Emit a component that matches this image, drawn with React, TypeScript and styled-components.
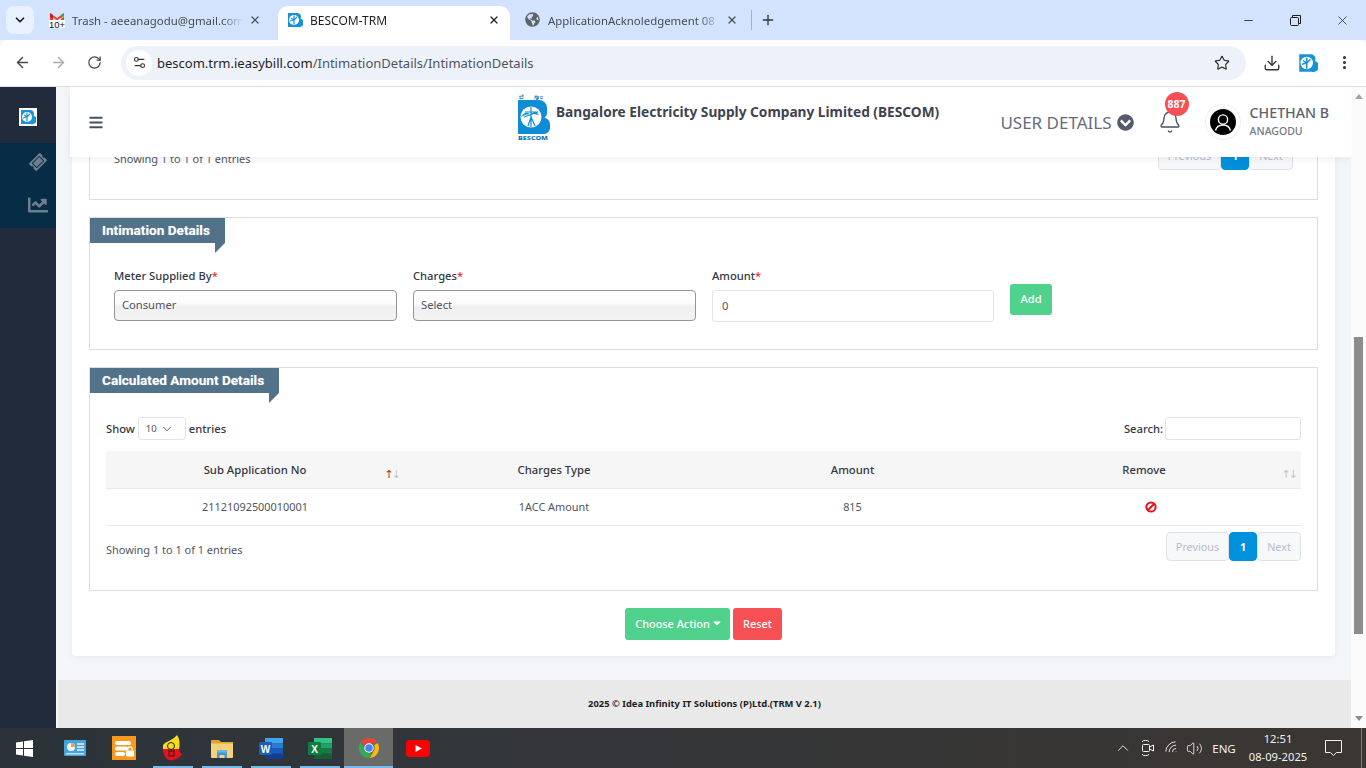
import React from "react";
import styled, { createGlobalStyle } from "styled-components";
import { ArrowLeft, ArrowRight, Bell, ChevronDown, ChevronUp, Download, EllipsisVertical, Minus, Plus, RotateCw, Settings2, Star, Volume2, Wifi, X } from "lucide-react";
import { FaBars, FaChartLine, FaChevronCircleDown, FaGlobeAmericas, FaTicketAlt, FaCaretDown } from "react-icons/fa";

const Global = createGlobalStyle`
  html, body { margin: 0; padding: 0; background: #f4f5f8; }
  * { box-sizing: border-box; }
  body { font-family: "Noto Sans", "Open Sans", sans-serif; }
`;

const Root = styled.div`width: 1366px; height: 768px; overflow: hidden; display: flex; flex-direction: column;`;

/* Browser chrome */
const TabStrip = styled.div`height: 40px; flex: none; background: #d3e3fd; display: flex; align-items: flex-end; position: relative;`;
const TabMenu = styled.div`width: 28px; height: 28px; margin: 0 6px 6px 6px; background: #e9f0fe; border-radius: 8px; display: flex; align-items: center; justify-content: center; color: #1f1f1f;`;
const Tab = styled.div<{ $w: number; $active?: boolean; $pl?: number; $pr?: number }>`
  width: ${p => p.$w}px; height: 34px; flex: none; display: flex; align-items: center; padding: 0 ${p => p.$pr ?? 10}px 6px ${p => p.$pl ?? 9}px; margin-right: 2px;
  border-radius: 10px 10px 0 0; background: ${p => (p.$active ? "#fff" : "transparent")};
  color: ${p => (p.$active ? "#1f1f1f" : "#474c52")};
`;
const TabIcon = styled.span`width: 16px; height: 16px; flex: none; display: flex; margin-right: 7px;`;
const TabTitle = styled.span<{ $active?: boolean }>`flex: 1; font: ${p => (p.$active ? "12px" : "11.4px")} "Noto Sans", sans-serif; white-space: nowrap; overflow: hidden; margin-right: ${p => (p.$active ? 0 : "6px")}; mask-image: linear-gradient(90deg, #000 88%, transparent 100%);`;
const TabSep = styled.div`width: 1px; height: 20px; background: #9db3d0; margin: 0 0 10px -1px;`;
const NewTab = styled.div`width: 32px; height: 34px; padding-bottom: 6px; display: flex; align-items: center; justify-content: center; color: #333;`;
const WindowControls = styled.div`margin-left: auto; display: flex; height: 40px; align-items: center; color: #1f1f1f;`;
const WinButton = styled.div`width: 47px; height: 40px; display: flex; align-items: center; justify-content: center;`;

const Toolbar = styled.div`height: 47px; flex: none; background: #fff; display: flex; align-items: center; padding: 0 0 1px 0; border-bottom: 1px solid #dcdfe3; border-radius: 8px 8px 0 0;`;
const NavButton = styled.div<{ $muted?: boolean; $w?: number }>`width: ${p => p.$w ?? 36}px; height: 34px; flex: none; display: flex; align-items: center; justify-content: center; color: ${p => (p.$muted ? "#a9acb0" : "#474747")};`;
const AddressBar = styled.div`width: 1125px; height: 34px; margin-left: 5px; border-radius: 17px; background: #edf2fa; display: flex; align-items: center; padding: 0 16px 0 5px;`;
const SiteChip = styled.div`width: 26px; height: 26px; border-radius: 50%; background: #fff; display: flex; align-items: center; justify-content: center; color: #333; margin-right: 5px;`;
const Url = styled.div`flex: 1; font: 13px "Noto Sans", sans-serif; color: #1f1f1f; span { color: #50555c; }`;
const ToolGroup = styled.div`display: flex; align-items: center; margin-left: 8px;`;

/* Page */
const Body = styled.div`flex: 1; min-height: 0; display: flex;`;
const Sidebar = styled.aside`width: 56px; flex: none; background: #222b3c; display: flex; flex-direction: column;`;
const SideLogo = styled.div`height: 56px; display: flex; align-items: center; justify-content: center; padding: 4px 0 0 0;`;
const SideLogoTile = styled.div`width: 18px; height: 18px; background: #fff; display: flex; align-items: center; justify-content: center;`;
const SideNav = styled.nav`height: 85px; background: #062c46; display: flex; flex-direction: column; align-items: center; padding-top: 9px; gap: 23px; color: #6d7f8e;`;
const SideItem = styled.div<{ $tilt?: boolean }>`height: 20px; display: flex; align-items: center; justify-content: center; padding-left: 20px; svg { transform: ${p => (p.$tilt ? "rotate(-45deg)" : "none")}; }`;

const Main = styled.main`flex: 1; min-width: 0; position: relative; overflow: hidden; display: flex; flex-direction: column; justify-content: flex-end; background: #f4f5f8;`;
const Header = styled.header`
  position: absolute; top: 0; left: 14px; right: 0; height: 70px; background: #fff; z-index: 5;
  box-shadow: 0 2px 8px rgba(60, 70, 90, .08); display: flex; align-items: center; padding: 0 22px 0 19px;
`;
const Burger = styled.div`color: #4a4f5e; display: flex; width: 14px; margin-right: 415px;`;
const Brand = styled.div`display: flex; align-self: flex-start; padding-top: 6px;`;
const BrandTitle = styled.div`font: 700 13.7px "Noto Sans", sans-serif; color: #3f4350; margin: 9px 0 0 6px; white-space: nowrap;`;
const HeaderRight = styled.div`margin-left: auto; display: flex; align-items: center;`;
const UserDetails = styled.div`display: flex; align-items: center; gap: 5px; font: 400 17px "Noto Sans", sans-serif; color: #656b7c; margin-right: 24px; svg { color: #555b6e; }`;
const BellWrap = styled.div`position: relative; width: 24px; height: 24px; color: #4a4f5e; margin-right: 23px;`;
const BellBadge = styled.span`position: absolute; left: 7px; top: -18px; width: 24px; height: 24px; border-radius: 50%; background: #f65054; color: #fff; font: 700 10.5px "Noto Sans", sans-serif; display: flex; align-items: center; justify-content: center;`;
const Avatar = styled.div`width: 36px; height: 36px; border-radius: 50%; border: 1px solid #eceef1; display: flex; align-items: center; justify-content: center; margin-right: 9px;`;
const UserName = styled.div`display: flex; flex-direction: column; color: #5a6070; padding-bottom: 2px;`;
const UserFirst = styled.span`font: 500 14.2px "Noto Sans", sans-serif; line-height: 20px;`;
const UserLast = styled.span`font: 500 10.5px "Noto Sans", sans-serif; line-height: 16px; color: #737887;`;

const Panel = styled.div`flex: none; width: 1263px; margin: 0 0 24px 16px; padding: 0 17px 16px; background: #fff; border-radius: 4px; box-shadow: 0 1px 6px rgba(80, 90, 110, .08); display: flex; flex-direction: column; gap: 17px;`;
const Box = styled.section`border: 1px solid #dcdcdc; display: flex; flex-direction: column; align-items: stretch;`;
const BoxTitle = styled.h3`
  align-self: flex-start; height: 25px; margin: 0; padding: 0 15px 0 12px; background: #52728a; color: #fff; position: relative;
  font: 700 13.6px/24px Roboto, sans-serif; text-shadow: 0 0 1px rgba(255,255,255,.4);
  &::after { content: ""; position: absolute; right: 0; top: 100%; border-style: solid; border-width: 10px 10px 0 0; border-color: #52728a transparent transparent transparent; }
`;
const TableBottom = styled.div<{ $pad: number }>`display: flex; justify-content: space-between; align-items: flex-end; padding: 0 ${p => p.$pad}px 29px;`;
const InfoText = styled.div`font-size: 10.95px; color: #50555f; line-height: 16px; margin-bottom: 3px;`;
const Pager = styled.div`display: flex; height: 29px;`;
const PageBtn = styled.div<{ $active?: boolean; $w: number }>`
  width: ${p => p.$w}px; display: flex; align-items: center; justify-content: center; font-size: 10.8px; border-radius: 4px;
  background: ${p => (p.$active ? "#0090dc" : "#f7f8fa")}; color: ${p => (p.$active ? "#fff" : "#b5bcc7")};
  border: 1px solid ${p => (p.$active ? "#0090dc" : "#dee2e6")}; font-weight: ${p => (p.$active ? 700 : 400)};
`;
const FormGrid = styled.div`display: grid; grid-template-columns: 283px 283px 282px 42px; gap: 16px; margin-top: 26px; padding: 0 24px 27px;`;
const Field = styled.div`display: flex; flex-direction: column;`;
const Label = styled.label`font: 500 11.2px/14px "Noto Sans", sans-serif; color: #33373f; margin-bottom: 7px; b { color: #e2202c; font-weight: 400; }`;
const GlossSelect = styled.select`
  height: 31px; width: 100%; appearance: none; border: 1px solid #959595; border-radius: 4px; padding: 0 7px 2px;
  background: linear-gradient(180deg, #fff 0%, #fdfdfd 42%, #f0f0f0 55%, #f3f3f3 100%); color: #50555f; font: 11.2px "Noto Sans", sans-serif; margin-bottom: 1px;
`;
const TextInput = styled.input<{ $w?: number; $h?: number }>`
  height: ${p => p.$h ?? 32}px; width: ${p => (p.$w ? `${p.$w}px` : "100%")}; border: 1px solid #e1e3e6; border-radius: 3px; padding: 0 9px;
  background: #fff; color: #50555f; font: 11.2px "Noto Sans", sans-serif; outline: none;
`;
const AddBtn = styled.button`align-self: end; height: 31px; width: 42px; margin-bottom: 7px; border: 0; border-radius: 3px; background: #51d28c; color: #fff; font: 500 11.2px "Noto Sans", sans-serif; padding: 0 0 2px;`;
const TableTop = styled.div`display: flex; justify-content: space-between; align-items: center; height: 23px; margin: 24px 16px 11px;`;
const TopLabel = styled.div`display: flex; align-items: center; font: 500 11.2px "Noto Sans", sans-serif; color: #33373f; gap: 2px;`;
const LengthSelect = styled.div`position: relative; width: 48px; height: 23px; border: 1px solid #e1e3e6; border-radius: 3px; font: 400 9.5px/21px "Noto Sans", sans-serif; color: #50555f; padding-left: 7px; margin: 0 1px; svg { position: absolute; right: 11px; top: 4px; color: #444; }`;
const DataTable = styled.table`width: 1195px; margin: 0 16px 6px; border-collapse: collapse; table-layout: fixed;`;
const Th = styled.th<{ $w: number; $pr?: number }>`
  width: ${p => p.$w}px; height: 38px; position: relative; background: #f6f6f6; border-bottom: 1px solid #e8e8e8; padding: 0 ${p => p.$pr ?? 0}px 0 0;
  font: 500 11.3px "Noto Sans", sans-serif; color: #33373f; text-align: center;
`;
const Sort = styled.span`position: absolute; right: 5px; top: 18px; font: 11px/12px "DejaVu Sans", sans-serif; letter-spacing: -2px; color: #c4c4c4; i { color: #b03030; font-style: normal; }`;
const Td = styled.td`height: 37px; border-bottom: 1px solid #e8e8e8; text-align: center; font: 10.9px "Noto Sans", sans-serif; color: #50555f; padding: 0 0 2px;`;
const RemoveIcon = styled.svg`vertical-align: -2px;`;
const Actions = styled.div`display: flex; justify-content: center; gap: 3px;`;
const ActionBtn = styled.button<{ $c: string; $w: number; $pl?: number }>`width: ${p => p.$w}px; height: 32px; border: 0; border-radius: 3px; padding: 0 0 2px ${p => p.$pl ?? 0}px; background: ${p => p.$c}; color: #fff; font: 500 10.9px "Noto Sans", sans-serif; display: flex; align-items: center; justify-content: center; gap: 1px;`;
const Foot = styled.footer`flex: none; height: 48px; margin-left: 2px; padding-bottom: 1px; background: #e9e9e9; display: flex; align-items: center; justify-content: center; font: 700 9.4px "Noto Sans", sans-serif; color: #1d1d1f;`;

const ScrollBar = styled.div`width: 15px; flex: none; background: #fbfbfb; position: relative; display: flex; flex-direction: column; align-items: center; justify-content: space-between; padding: 7px 0 7px;`;
const Thumb = styled.div`position: absolute; left: 3px; top: 250px; width: 9px; height: 297px; background: #8c8c8c;`;
const Arrow = styled.div<{ $down?: boolean }>`width: 0; height: 0; border-left: 4.5px solid transparent; border-right: 4.5px solid transparent; ${p => (p.$down ? "border-top: 5px solid #8c8c8c;" : "border-bottom: 5px solid #a3a3a3;")}`;

/* Taskbar */
const Taskbar = styled.div`height: 40px; flex: none; background: linear-gradient(90deg, #2b3338 0%, #33363a 35%, #3a3632 100%); display: flex; align-items: stretch; color: #fff;`;
const StartButton = styled.div`width: 50px; flex: none; padding-left: 16px; display: flex; align-items: center;`;
const Tile = styled.div<{ $open?: boolean; $active?: boolean }>`
  width: 49px; flex: none; display: flex; align-items: center; justify-content: center; position: relative;
  background: ${p => (p.$active ? "#6a6a68" : "transparent")};
  &::after { content: ""; position: absolute; bottom: 0; height: 2px; background: #76b9ed; left: ${p => (p.$active ? 0 : "5px")}; right: ${p => (p.$active ? 0 : "4px")}; display: ${p => (p.$open ? "block" : "none")}; }
`;
const Tray = styled.div`margin-left: auto; display: flex; align-items: stretch; color: #f2f2f2;`;
const TrayIcon = styled.div<{ $w: number; $mr?: number }>`width: ${p => p.$w}px; margin-right: ${p => p.$mr ?? 0}px; display: flex; align-items: center; justify-content: center;`;
const Lang = styled.div`font: 11.5px "Noto Sans", sans-serif; width: 34px; margin-right: 2px; display: flex; align-items: center; justify-content: center;`;
const Clock = styled.div`width: 70px; align-self: center; text-align: center; font: 11.2px/18px "Noto Sans", sans-serif;`;
const Notify = styled.div`width: 40px; margin-right: 8px; display: flex; justify-content: center; align-items: center;`;
const ShowDesktop = styled.div`width: 5px; border-left: 1px solid #7a7a7a;`;

const BesFav = ({ s = 16 }: { s?: number }) => (
  <svg width={s} height={s} viewBox="0 0 16 16">
    <path d="M1 1h9.500a3.600 3.600 0 0 1 3 5.400A3.800 3.800 0 0 1 11 15H1z" fill="#1a93d6" />
    <circle cx="7" cy="8" r="5" fill="#fff" />
    <path d="M7 3.500v9M4 6l3 2 3-3M3 9l4-1" stroke="#1a93d6" strokeWidth="1.200" fill="none" />
  </svg>
);

const BesLogo = () => (
  <svg width="32" height="47" viewBox="0 0 32 47">
    <text x="1" y="6" fontSize="6.500" fontWeight="700" fill="#1580c4" fontFamily="Noto Sans, sans-serif" textLength="24">ಬೆಸ್ಕಾಂ</text>
    <path d="M0 7h21a8 8 0 0 1 8 8v5c0 2-1 3.500-2.500 4.500C30 26 32 28 32 31v4a6 6 0 0 1-6 6H0z" fill="#0f8cd6" />
    <circle cx="13" cy="24" r="10.500" fill="#fff" />
    <path d="M13 14v20M7 19l13 0M6 24l14-5M10 33l3-9 4 9" stroke="#0f8cd6" strokeWidth="1.200" fill="none" />
    <path d="M3 24c3-5 6-5 9-3-3 0-6 1-9 3zM13 21c3-3 6-2 8 1-3-1-5-1-8-1z" fill="#0f8cd6" />
    <text x="0" y="46.500" fontSize="5.500" fontWeight="800" fill="#0f6fae" fontFamily="Noto Sans, sans-serif" textLength="30" lengthAdjust="spacingAndGlyphs">BESCOM</text>
  </svg>
);

const GmailIcon = () => (
  <svg width="16" height="16" viewBox="0 0 16 16">
    <path d="M1 9V1l7 5 7-5v8h-3V5.500L8 8.600 4 5.500V9z" fill="#ea4335" />
    <path d="M1 1v4l3 2V3z" fill="#c5221f" />
    <path d="M15 1v4l-3 2V3z" fill="#fbbc04" />
    <path d="M12 3l3-2v3l-3 2z" fill="#34a853" />
    <rect x="0" y="8" width="16" height="8" fill="#fff" />
    <text x="0" y="15.800" fontSize="9" fontWeight="400" fill="#111" fontFamily="Liberation Sans, sans-serif" textLength="16" lengthAdjust="spacingAndGlyphs">10+</text>
  </svg>
);

const AvatarIcon = () => (
  <svg width="26" height="26" viewBox="0 0 26 26">
    <circle cx="13" cy="13" r="13" fill="#000" />
    <circle cx="13" cy="10.500" r="4.600" fill="#000" stroke="#fff" strokeWidth="1.400" />
    <path d="M5.500 21.500c1-4 4-5.500 7.500-5.500s6.500 1.500 7.500 5.500" fill="none" stroke="#fff" strokeWidth="1.400" />
  </svg>
);

const RestoreIcon = () => (
  <svg width="11" height="11" viewBox="0 0 11 11" fill="none" stroke="#1f1f1f" strokeWidth="1">
    <rect x="0.500" y="2.500" width="8" height="8" rx="1" />
    <path d="M2.500 2.500V.5h8v8H8.500" />
  </svg>
);

const WinLogo = () => (
  <svg width="17" height="17" viewBox="0 0 17 17" fill="#fff">
    <path d="M0 2.500l7-1V8H0zM8 1.300L17 0v8H8zM0 9h7v6.500l-7-1zM8 9h9v8l-9-1.300z" />
  </svg>
);

const ControlPanelIcon = () => (
  <svg width="22" height="16" viewBox="0 0 22 16">
    <rect width="22" height="16" rx="1" fill="#4aa3dc" />
    <circle cx="7" cy="7" r="4" fill="#f5f9fc" />
    <path d="M7 7V3a4 4 0 0 1 4 4z" fill="#f2a33a" />
    <path d="M13 4h7M13 7h7M13 10h7" stroke="#e7f3fb" strokeWidth="1.300" />
    <rect x="2" y="13" width="18" height="1.500" fill="#bfe0f5" />
  </svg>
);

const VaultIcon = () => (
  <svg width="24" height="24" viewBox="0 0 24 24">
    <rect width="24" height="24" fill="#f8981d" />
    <rect x="3" y="5" width="16" height="4" rx="2" fill="#fff" />
    <rect x="3" y="10.500" width="13" height="4" rx="2" fill="#fff" />
    <rect x="3" y="16" width="10" height="4" rx="2" fill="#fff" />
    <rect x="14" y="14.500" width="8" height="6" rx="1" fill="#fff" />
    <path d="M15.800 14.500v-1.500a2.200 2.200 0 0 1 4.400 0v1.500" fill="none" stroke="#fff" strokeWidth="1.200" />
  </svg>
);

const CustomAppIcon = () => (
  <svg width="20" height="26" viewBox="0 0 20 26">
    <path d="M0 10C3 6 9 6 14 0c3 4 3 10 2 15H0z" fill="#f7dc1d" />
    <path d="M0 14h16c0 3 2 4 3 5-3 5-9 7-13 6-3-1-6-5-6-11z" fill="#e8111b" />
    <circle cx="8" cy="11" r="3.500" fill="none" stroke="#222" strokeWidth="1" />
    <rect x="6" y="16" width="5" height="5" fill="none" stroke="#222" strokeWidth="1" />
  </svg>
);

const FolderIcon = () => (
  <svg width="22" height="19" viewBox="0 0 22 19">
    <path d="M0 2a1 1 0 0 1 1-1h7l2 2H0z" fill="#e0a526" />
    <rect y="3" width="22" height="16" rx="1" fill="#f4d27a" />
    <rect y="3" width="22" height="1.500" fill="#dba632" />
    <path d="M6 13h10v6h-2.500v-3h-5v3H6z" fill="#3d97d8" />
    <rect x="6" y="11" width="10" height="2.500" fill="#69b7ea" />
  </svg>
);

const WordIcon = () => (
  <svg width="24" height="21" viewBox="0 0 24 21">
    <rect x="6" y="0" width="18" height="5.300" fill="#41a5ee" />
    <rect x="6" y="5.200" width="18" height="5.300" fill="#2b7cd3" />
    <rect x="6" y="10.500" width="18" height="5.300" fill="#185abd" />
    <rect x="6" y="15.700" width="18" height="5.300" fill="#103f91" />
    <rect x="0" y="4" width="13" height="13" rx="1" fill="#1c5bb8" />
    <text x="6.500" y="14.500" textAnchor="middle" fontSize="10" fontWeight="700" fill="#fff" fontFamily="Liberation Sans, sans-serif">W</text>
  </svg>
);

const ExcelIcon = () => (
  <svg width="24" height="21" viewBox="0 0 24 21">
    <rect x="6" y="0" width="18" height="5.300" fill="#33c481" />
    <rect x="6" y="5.200" width="18" height="5.300" fill="#21a366" />
    <rect x="6" y="10.500" width="18" height="5.300" fill="#107c41" />
    <rect x="6" y="15.700" width="18" height="5.300" fill="#185c37" />
    <rect x="0" y="4" width="13" height="13" rx="1" fill="#107c41" />
    <text x="6.500" y="14.500" textAnchor="middle" fontSize="10" fontWeight="700" fill="#fff" fontFamily="Liberation Sans, sans-serif">X</text>
  </svg>
);

const ChromeIcon = () => (
  <svg width="24" height="24" viewBox="0 0 48 48">
    <path d="M24 4a20 20 0 0 1 17.300 10H24a10 10 0 0 0-9.300 6.300L7.800 11.700A20 20 0 0 1 24 4z" fill="#ea4335" />
    <path d="M41.300 14A20 20 0 0 1 25.500 44l8.800-15a10 10 0 0 0-.3-10.500z" fill="#fbbc04" />
    <path d="M25.500 44A20 20 0 0 1 7.800 11.700l8.500 17.300A10 10 0 0 0 28 33.500z" fill="#34a853" />
    <circle cx="24" cy="24" r="9.500" fill="#fff" />
    <circle cx="24" cy="24" r="7.500" fill="#4285f4" />
  </svg>
);

const YouTubeIcon = () => (
  <svg width="24" height="17" viewBox="0 0 24 17">
    <rect width="24" height="17" rx="4" fill="#f00" />
    <path d="M9.500 5l6.500 3.500-6.500 3.500z" fill="#fff" />
  </svg>
);

const MeetIcon = () => (
  <svg width="16" height="20" viewBox="0 0 16 20" fill="none" stroke="#f2f2f2" strokeWidth="1">
    <rect x="2.500" y="6.500" width="7" height="7" rx="1" />
    <path d="M9.500 9l4-2v6l-4-2" />
    <path d="M2 3.500c2-1.500 5-1.500 7 0M2 16.500c2 1.500 5 1.500 7 0" />
  </svg>
);

const NotifyIcon = () => (
  <svg width="17" height="16" viewBox="0 0 17 16" fill="none" stroke="#f2f2f2" strokeWidth="1">
    <path d="M.5.500h16v12h-5l-3 3-3-3h-5z" />
  </svg>
);

const BanIcon = () => (
  <RemoveIcon width="12" height="12" viewBox="0 0 12 12" fill="none" stroke="#e8101c" strokeWidth="2">
    <circle cx="6" cy="6" r="4.600" />
    <path d="M3 9l6-6" />
  </RemoveIcon>
);

const TabClose = () => <X size={12} strokeWidth={2.400} />;

const Pagination = () => (
  <Pager>
    <PageBtn $w={63}>Previous</PageBtn>
    <PageBtn $w={28} $active>1</PageBtn>
    <PageBtn $w={44}>Next</PageBtn>
  </Pager>
);

export default function App() {
  return (
    <Root>
      <Global />
      <TabStrip>
        <TabMenu><ChevronDown size={14} strokeWidth={3} /></TabMenu>
        <Tab $w={236} $pr={15}>
          <TabIcon><GmailIcon /></TabIcon>
          <TabTitle>Trash - aeeanagodu@gmail.com</TabTitle>
          <TabClose />
        </Tab>
        <Tab $w={232} $active>
          <TabIcon><BesFav /></TabIcon>
          <TabTitle $active>BESCOM-TRM</TabTitle>
          <TabClose />
        </Tab>
        <Tab $w={238} $pl={13} $pr={12}>
          <TabIcon><FaGlobeAmericas size={15} color="#5f6368" /></TabIcon>
          <TabTitle>ApplicationAcknoledgement 08</TabTitle>
          <TabClose />
        </Tab>
        <TabSep />
        <NewTab><Plus size={16} strokeWidth={2} /></NewTab>
        <WindowControls>
          <WinButton><Minus size={13} strokeWidth={1.500} /></WinButton>
          <WinButton><RestoreIcon /></WinButton>
          <WinButton><X size={15} strokeWidth={1.200} /></WinButton>
        </WindowControls>
      </TabStrip>

      <Toolbar>
        <NavButton $w={44}><ArrowLeft size={17} strokeWidth={2} /></NavButton>
        <NavButton $muted $w={28}><ArrowRight size={17} strokeWidth={2} /></NavButton>
        <NavButton $w={44}><RotateCw size={15} strokeWidth={2} /></NavButton>
        <AddressBar>
          <SiteChip><Settings2 size={15} strokeWidth={1.800} /></SiteChip>
          <Url>bescom.trm.ieasybill.com<span>/IntimationDetails/IntimationDetails</span></Url>
          <Star size={16} strokeWidth={1.800} color="#333" />
        </AddressBar>
        <ToolGroup>
          <NavButton><Download size={18} strokeWidth={1.800} color="#333" /></NavButton>
          <NavButton><BesFav s={20} /></NavButton>
          <NavButton><EllipsisVertical size={17} strokeWidth={2.400} color="#333" /></NavButton>
        </ToolGroup>
      </Toolbar>

      <Body>
        <Sidebar>
          <SideLogo><SideLogoTile><BesFav s={16} /></SideLogoTile></SideLogo>
          <SideNav>
            <SideItem $tilt><FaTicketAlt size={16} /></SideItem>
            <SideItem><FaChartLine size={20} /></SideItem>
          </SideNav>
        </Sidebar>

        <Main>
          <Header>
            <Burger><FaBars size={15} /></Burger>
            <Brand>
              <BesLogo />
              <BrandTitle>Bangalore Electricity Supply Company Limited (BESCOM)</BrandTitle>
            </Brand>
            <HeaderRight>
              <UserDetails>USER DETAILS <FaChevronCircleDown size={17} /></UserDetails>
              <BellWrap>
                <Bell size={24} strokeWidth={1.300} />
                <BellBadge>887</BellBadge>
              </BellWrap>
              <Avatar><AvatarIcon /></Avatar>
              <UserName>
                <UserFirst>CHETHAN B</UserFirst>
                <UserLast>ANAGODU</UserLast>
              </UserName>
            </HeaderRight>
          </Header>

          <Panel>
            <Box>
              <TableBottom $pad={24}>
                <InfoText>Showing 1 to 1 of 1 entries</InfoText>
                <Pagination />
              </TableBottom>
            </Box>

            <Box>
              <BoxTitle>Intimation Details</BoxTitle>
              <FormGrid>
                <Field>
                  <Label>Meter Supplied By<b>*</b></Label>
                  <GlossSelect defaultValue="Consumer"><option>Consumer</option></GlossSelect>
                </Field>
                <Field>
                  <Label>Charges<b>*</b></Label>
                  <GlossSelect defaultValue="Select"><option>Select</option></GlossSelect>
                </Field>
                <Field>
                  <Label>Amount<b>*</b></Label>
                  <TextInput defaultValue="0" />
                </Field>
                <AddBtn>Add</AddBtn>
              </FormGrid>
            </Box>

            <Box>
              <BoxTitle>Calculated Amount Details</BoxTitle>
              <TableTop>
                <TopLabel>Show <LengthSelect>10<ChevronDown size={14} strokeWidth={1.500} /></LengthSelect> entries</TopLabel>
                <TopLabel>Search: <TextInput $w={136} $h={23} /></TopLabel>
              </TableTop>
              <DataTable>
                <thead>
                  <tr>
                    <Th $w={298}>Sub Application No<Sort><i>↑</i>↓</Sort></Th>
                    <Th $w={300}>Charges Type</Th>
                    <Th $w={297}>Amount</Th>
                    <Th $w={300} $pr={14}>Remove<Sort>↑↓</Sort></Th>
                  </tr>
                </thead>
                <tbody>
                  <tr>
                    <Td>21121092500010001</Td>
                    <Td>1ACC Amount</Td>
                    <Td>815</Td>
                    <Td><BanIcon /></Td>
                  </tr>
                </tbody>
              </DataTable>
              <TableBottom $pad={16}>
                <InfoText>Showing 1 to 1 of 1 entries</InfoText>
                <Pagination />
              </TableBottom>
            </Box>

            <Actions>
              <ActionBtn $c="#51d28c" $w={105} $pl={3}>Choose Action <FaCaretDown size={12} /></ActionBtn>
              <ActionBtn $c="#f65054" $w={49}>Reset</ActionBtn>
            </Actions>
          </Panel>

          <Foot>2025 © Idea Infinity IT Solutions (P)Ltd.(TRM V 2.1)</Foot>
        </Main>

        <ScrollBar>
          <Arrow />
          <Thumb />
          <Arrow $down />
        </ScrollBar>
      </Body>

      <Taskbar>
        <StartButton><WinLogo /></StartButton>
        <Tile><ControlPanelIcon /></Tile>
        <Tile><VaultIcon /></Tile>
        <Tile $open><CustomAppIcon /></Tile>
        <Tile $open><FolderIcon /></Tile>
        <Tile $open><WordIcon /></Tile>
        <Tile $open><ExcelIcon /></Tile>
        <Tile $open $active><ChromeIcon /></Tile>
        <Tile><YouTubeIcon /></Tile>
        <Tray>
          <TrayIcon $w={25}><ChevronUp size={18} strokeWidth={1.200} /></TrayIcon>
          <TrayIcon $w={25}><MeetIcon /></TrayIcon>
          <TrayIcon $w={23}><Wifi size={16} strokeWidth={1.300} style={{ transform: "rotate(-45deg)" }} /></TrayIcon>
          <TrayIcon $w={23} $mr={1}><Volume2 size={17} strokeWidth={1.200} /></TrayIcon>
          <Lang>ENG</Lang>
          <Clock>12:51<br />08-09-2025</Clock>
          <Notify><NotifyIcon /></Notify>
          <ShowDesktop />
        </Tray>
      </Taskbar>
    </Root>
  );
}
